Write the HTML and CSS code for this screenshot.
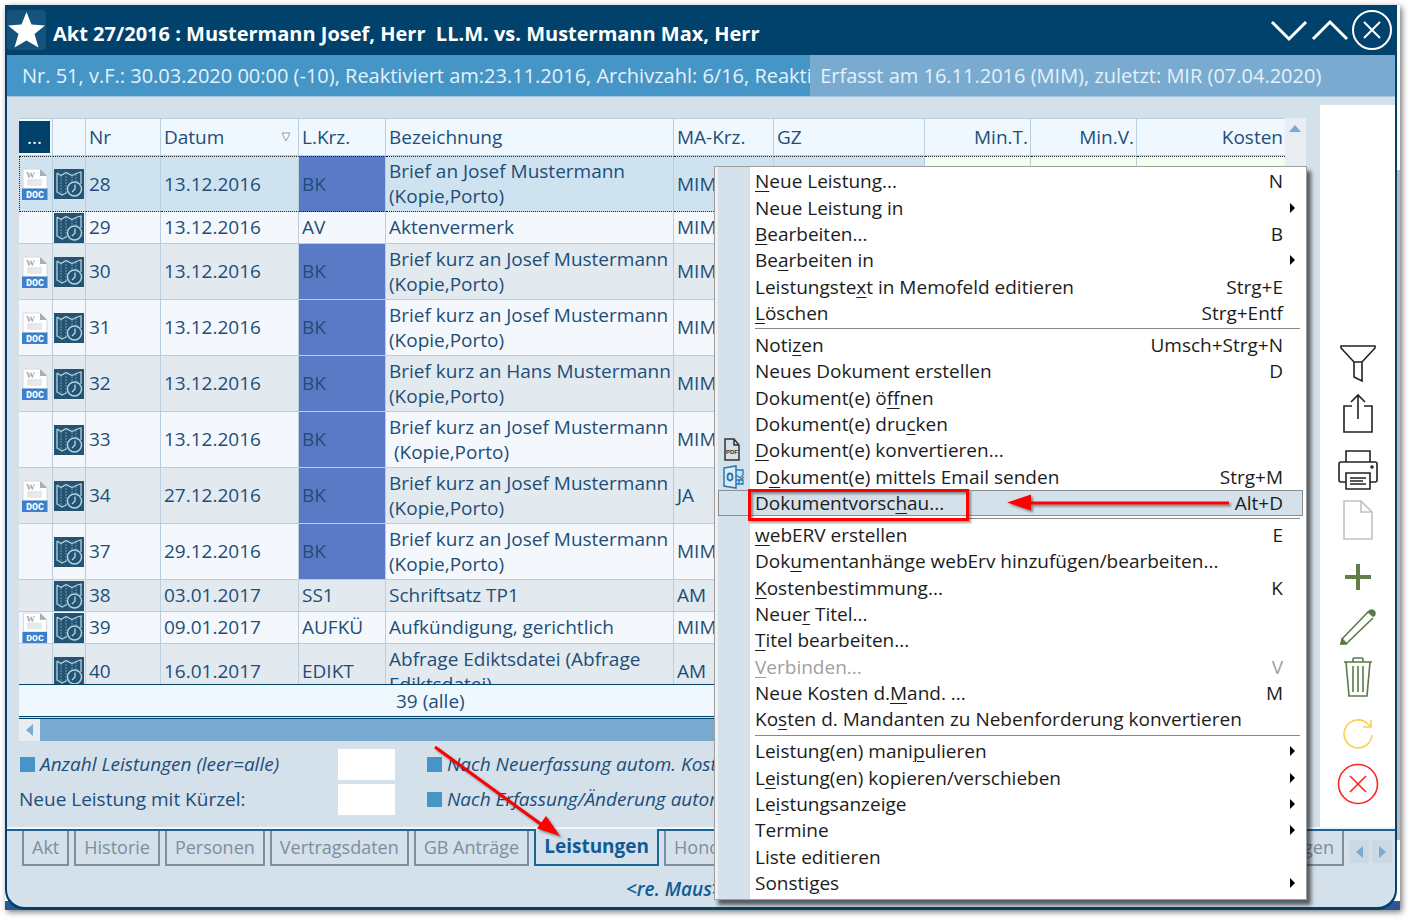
FILE: index.html
```html
<!DOCTYPE html>
<html lang="de">
<head>
<meta charset="utf-8">
<title>Akt 27/2016</title>
<link rel="stylesheet" href="styles.css">
</head>
<body>
<svg class="defs" aria-hidden="true">
  <symbol id="doc" viewBox="0 0 26 32">
    <path d="M1 1h17l7 7v13H1z" fill="#fff" stroke="#d5d8da" stroke-width="1"/>
    <path d="M18 1l7 7h-7z" fill="#a9adb0"/>
    <path d="M5 11h15v7H5z" fill="#e6e9ea"/>
    <text x="4" y="10" class="w-mark">W</text>
    <path d="M0 20.500h25.500V32H0z" fill="#3e80c8"/>
    <text x="13" y="30" class="doc-mark">DOC</text>
  </symbol>
  <symbol id="map" viewBox="0 0 30 30">
    <path d="M0 0h30v30H0z" fill="#235473"/>
    <path d="M3 4l4 2.500 5-3 6 3 4-2 5-1.500v12M3 4v19l5 3 5-2.500" fill="none" stroke="#b9d0de" stroke-width="1.300"/>
    <path d="M7 7v18M12 4v19M18 7v8M22 5v8" fill="none" stroke="#6f97b0" stroke-width="1" stroke-dasharray="2 1"/>
    <circle cx="20.500" cy="20" r="7" fill="#235473" stroke="#b9d0de" stroke-width="1.500"/>
    <path d="M21 15.500V20l-3 3" fill="none" stroke="#b9d0de" stroke-width="1.400"/>
  </symbol>
</svg>

<div class="frame">
<main class="window">
  <header class="titlebar">
    <button class="star" aria-label="Favorit"><svg viewBox="0 0 39 40"><path d="M19.500 2l5 12.500 13.500.9-10.500 8.600 4 13.500-12-7-12 7 4-13.500L1 15.400l13.500-.9z" fill="#fff"/></svg></button>
    <h1>Akt 27/2016 : Mustermann Josef, Herr&nbsp; LL.M. vs. Mustermann Max, Herr</h1>
    <div class="winbtns">
      <button aria-label="Nach unten"><svg width="41" height="42" viewBox="0 0 41 42"><path d="M3 13l17 17 17-17"/></svg></button>
      <button aria-label="Nach oben"><svg width="41" height="42" viewBox="0 0 41 42"><path d="M3 30l17-17 17 17"/></svg></button>
      <button aria-label="Schließen"><svg width="42" height="42" viewBox="0 0 42 42"><circle cx="21" cy="21" r="19"/><path d="M13 13l16 16M29 13L13 29"/></svg></button>
    </div>
  </header>
  <div class="info">
    <div class="info-a">Nr. 51, v.F.: 30.03.2020 00:00 (-10), Reaktiviert am:23.11.2016, Archivzahl: 6/16, Reaktiviert</div>
    <div class="info-b">Erfasst am 16.11.2016 (MIM), zuletzt: MIR (07.04.2020)</div>
  </div>

  <div class="work">
    <section class="content">
      <div class="gridbox">
        <div class="tablewrap">
          <table>
            <colgroup><col class="c-doc"><col class="c-map"><col class="c-nr"><col class="c-date"><col class="c-krz"><col class="c-bez"><col class="c-ma"><col><col class="c-min"><col class="c-min"><col class="c-cost"></colgroup>
            <thead><tr><th class="dots"><button>...</button></th><th></th><th>Nr</th><th><span class="sorted">Datum <svg width="10" height="10" viewBox="0 0 10 10"><path d="M1 1h8L5 9z" fill="#fff" stroke="#999"/></svg></span></th><th>L.Krz.</th><th>Bezeichnung</th><th>MA-Krz.</th><th>GZ</th><th class="r">Min.T.</th><th class="r">Min.V.</th><th class="r">Kosten</th></tr></thead>
            <tbody>
              <tr class="sel two"><td><svg class="doc"><use href="#doc"/></svg></td><td><svg class="map"><use href="#map"/></svg></td><td>28</td><td>13.12.2016</td><td class="bk">BK</td><td>Brief an Josef Mustermann<br>(Kopie,Porto)</td><td>MIM</td><td></td><td class="g"></td><td class="g"></td><td class="g"></td></tr>
              <tr><td></td><td><svg class="map"><use href="#map"/></svg></td><td>29</td><td>13.12.2016</td><td>AV</td><td>Aktenvermerk</td><td>MIM</td><td></td><td></td><td></td><td></td></tr>
              <tr class="two"><td><svg class="doc"><use href="#doc"/></svg></td><td><svg class="map"><use href="#map"/></svg></td><td>30</td><td>13.12.2016</td><td class="bk">BK</td><td>Brief kurz an Josef Mustermann<br>(Kopie,Porto)</td><td>MIM</td><td></td><td></td><td></td><td></td></tr>
              <tr class="two"><td><svg class="doc"><use href="#doc"/></svg></td><td><svg class="map"><use href="#map"/></svg></td><td>31</td><td>13.12.2016</td><td class="bk">BK</td><td>Brief kurz an Josef Mustermann<br>(Kopie,Porto)</td><td>MIM</td><td></td><td></td><td></td><td></td></tr>
              <tr class="two"><td><svg class="doc"><use href="#doc"/></svg></td><td><svg class="map"><use href="#map"/></svg></td><td>32</td><td>13.12.2016</td><td class="bk">BK</td><td>Brief kurz an Hans Mustermann<br>(Kopie,Porto)</td><td>MIM</td><td></td><td></td><td></td><td></td></tr>
              <tr class="two"><td></td><td><svg class="map"><use href="#map"/></svg></td><td>33</td><td>13.12.2016</td><td class="bk">BK</td><td>Brief kurz an Josef Mustermann<br>&nbsp;(Kopie,Porto)</td><td>MIM</td><td></td><td></td><td></td><td></td></tr>
              <tr class="two"><td><svg class="doc"><use href="#doc"/></svg></td><td><svg class="map"><use href="#map"/></svg></td><td>34</td><td>27.12.2016</td><td class="bk">BK</td><td>Brief kurz an Josef Mustermann<br>(Kopie,Porto)</td><td>JA</td><td></td><td></td><td></td><td></td></tr>
              <tr class="two"><td></td><td><svg class="map"><use href="#map"/></svg></td><td>37</td><td>29.12.2016</td><td class="bk">BK</td><td>Brief kurz an Josef Mustermann<br>(Kopie,Porto)</td><td>MIM</td><td></td><td></td><td></td><td></td></tr>
              <tr><td></td><td><svg class="map"><use href="#map"/></svg></td><td>38</td><td>03.01.2017</td><td>SS1</td><td>Schriftsatz TP1</td><td>AM</td><td></td><td></td><td></td><td></td></tr>
              <tr><td><svg class="doc"><use href="#doc"/></svg></td><td><svg class="map"><use href="#map"/></svg></td><td>39</td><td>09.01.2017</td><td>AUFKÜ</td><td>Aufkündigung, gerichtlich</td><td>MIM</td><td></td><td></td><td></td><td></td></tr>
              <tr class="two"><td></td><td><svg class="map"><use href="#map"/></svg></td><td>40</td><td>16.01.2017</td><td>EDIKT</td><td>Abfrage Ediktsdatei (Abfrage<br>Ediktsdatei)</td><td>AM</td><td></td><td></td><td></td><td></td></tr>
            </tbody>
          </table>
        </div>
        <div class="vscroll"><svg width="12" height="7" viewBox="0 0 12 7"><path d="M0 7l6-7 6 7z" fill="#79abd0"/></svg></div>
      </div>
      <div class="sum">39 (alle)</div>
      <div class="hscroll"><button aria-label="Nach links"><svg width="7" height="12" viewBox="0 0 7 12"><path d="M7 0v12L0 6z" fill="#79abd0"/></svg></button></div>
      <div class="options">
        <label class="chk"><input type="checkbox">Anzahl Leistungen (leer=alle)</label>
        <input class="txt" type="text" aria-label="Anzahl Leistungen">
        <label class="chk"><input type="checkbox">Nach Neuerfassung autom. Kosten</label>
        <label for="krz">Neue Leistung mit Kürzel:</label>
        <input class="txt" type="text" id="krz">
        <label class="chk"><input type="checkbox">Nach Erfassung/Änderung autom.</label>
      </div>
    </section>
    <aside class="tools">
      <button aria-label="Filter"><svg viewBox="0 0 42 42" stroke="#222"><path d="M4 4h34v2L25 20H17L4 6zM17 20v15l8 4V20M17 20h8"/></svg></button>
      <button aria-label="Exportieren"><svg viewBox="0 0 42 42" stroke="#222"><path d="M15 14H7v26h28V14h-8M21 27V3M14 10l7-7 7 7"/></svg></button>
      <button class="grp" aria-label="Drucken"><svg viewBox="0 0 42 42" stroke="#222"><path d="M9 13V2h24v11M9 33H4q-2 0-2-2V15q0-2 2-2h34q2 0 2 2v16q0 2-2 2h-5M9 24h24v16H9z"/><path d="M13 29h16M13 32h13M13 35h16"/><circle cx="35" cy="18" r="1"/></svg></button>
      <button aria-label="Neues Dokument"><svg viewBox="0 0 42 42" stroke="#c2c2c2" stroke-width="2"><path d="M7 2h17l11 11v27H7zM24 2v11h11"/></svg></button>
      <button class="grp" aria-label="Hinzufügen"><svg class="thick" viewBox="0 0 42 42" stroke="#5f7f48"><path d="M21 8v26M8 21h26"/></svg></button>
      <button aria-label="Bearbeiten"><svg viewBox="0 0 42 42" stroke="#5a7a45"><path d="M5 33L31 6M9 38L36 12M4 38l1-5 4 5z"/><path d="M3 39l2-7 5 5zM31 5q3-3 6-1t1 6l-2 1-6-5z" fill="#5a7a45" stroke="none"/></svg></button>
      <button aria-label="Löschen"><svg viewBox="0 0 42 42" stroke="#5a7a45"><path d="M7 6h28M16 6V3q0-1 1-1h8q1 0 1 1v3M9 6l3 34h18l3-34M16 10v26M21 10v26M26 10v26"/></svg></button>
      <button class="grp" aria-label="Aktualisieren"><svg viewBox="0 0 42 42" stroke="#fbd04f"><path d="M35 22a14 14 0 1 1-4-11l3 3M34 7v7h-8"/></svg></button>
      <button aria-label="Abbrechen"><svg viewBox="0 0 42 42" stroke="#f22"><circle cx="21" cy="21" r="19.500"/><path d="M13 13l16 16M29 13L13 29"/></svg></button>
    </aside>
  </div>

  <nav class="tabs">
    <button>Akt</button><button>Historie</button><button>Personen</button><button>Vertragsdaten</button><button>GB Anträge</button><button class="on">Leistungen</button><button>Honorar</button>
    <button class="last">Buchungen</button>
    <button class="nav" aria-label="Vorherige"><svg width="7" height="12" viewBox="0 0 7 12"><path d="M7 0v12L0 6z" fill="#79abd0"/></svg></button>
    <button class="nav" aria-label="Nächste"><svg width="7" height="12" viewBox="0 0 7 12"><path d="M0 0v12l7-6z" fill="#79abd0"/></svg></button>
  </nav>
  <footer class="hint">&lt;re. Maus&gt;</footer>
</main>
</div>

<div class="menu" role="menu">
  <button><i></i><span><u>N</u>eue Leistung...</span><kbd>N</kbd></button>
  <button class="sub"><i></i><span>Neue Leistung in</span></button>
  <button><i></i><span><u>B</u>earbeiten...</span><kbd>B</kbd></button>
  <button class="sub"><i></i><span>Be<u>a</u>rbeiten in</span></button>
  <button><i></i><span>Leistungste<u>x</u>t in Memofeld editieren</span><kbd>Strg+E</kbd></button>
  <button><i></i><span><u>L</u>öschen</span><kbd>Strg+Entf</kbd></button>
  <hr>
  <button><i></i><span>Noti<u>z</u>en</span><kbd>Umsch+Strg+N</kbd></button>
  <button><i></i><span>Neues Dokument erstellen</span><kbd>D</kbd></button>
  <button><i></i><span>Dokument(e) ö<u>f</u>fnen</span></button>
  <button><i></i><span>Dokument(e) dru<u>c</u>ken</span></button>
  <button><i><svg width="18" height="24" viewBox="0 0 18 24"><path d="M2 1h9l5 6v15H2zM11 1v6h5" fill="none" stroke="#333" stroke-width="1.500"/><text x="9" y="16" class="pdf-mark">PDF</text></svg></i><span><u>D</u>okument(e) konvertieren...</span></button>
  <button><i><svg width="22" height="24" viewBox="0 0 22 24"><path d="M1 3l12-2v22L1 21z" fill="#dcecf7" stroke="#2878b8" stroke-width="1.500"/><ellipse cx="7" cy="12" rx="2.500" ry="3.500" fill="none" stroke="#2878b8" stroke-width="1.800"/><path d="M13 5h7v5l-3 3-4-3M13 15h7v4h-7M16 19v-3l5-4" fill="none" stroke="#2878b8" stroke-width="1.300"/></svg></i><span>D<u>o</u>kument(e) mittels Email senden</span><kbd>Strg+M</kbd></button>
  <button class="hot"><i></i><span>Dokumentvorsc<u>h</u>au...</span><kbd>Alt+D</kbd></button>
  <hr>
  <button><i></i><span><u>w</u>ebERV erstellen</span><kbd>E</kbd></button>
  <button><i></i><span>Dok<u>u</u>mentanhänge webErv hinzufügen/bearbeiten...</span></button>
  <button><i></i><span><u>K</u>ostenbestimmung...</span><kbd>K</kbd></button>
  <button><i></i><span>Neue<u>r</u> Titel...</span></button>
  <button><i></i><span><u>T</u>itel bearbeiten...</span></button>
  <button disabled><i></i><span><u>V</u>erbinden...</span><kbd>V</kbd></button>
  <button><i></i><span>Neue Kosten d.<u>M</u>and. ...</span><kbd>M</kbd></button>
  <button><i></i><span>Ko<u>s</u>ten d. Mandanten zu Nebenforderung konvertieren</span></button>
  <hr>
  <button class="sub"><i></i><span>Leistung(en) mani<u>p</u>ulieren</span></button>
  <button class="sub"><i></i><span>L<u>e</u>istung(en) kopieren/verschieben</span></button>
  <button class="sub"><i></i><span>Le<u>i</u>stungsanzeige</span></button>
  <button class="sub"><i></i><span>Termine</span></button>
  <button><i></i><span>Liste editieren</span></button>
  <button class="sub"><i></i><span>Sonsti<u>g</u>es</span></button>
</div>

<svg class="marks" width="1409" height="919" viewBox="0 0 1409 919" aria-hidden="true">
  <path d="M749.500 490.500h218v29h-218z" fill="none" stroke="#f00" stroke-width="3"/>
  <path d="M1229 503H1028M435 747l107 78" fill="none" stroke="#f00" stroke-width="3"/>
  <path d="M1007 502.500l24-8v16zM560 836l-23-7.500 9-12.500z" fill="#f00"/>
</svg>
</body>
</html>
```
FILE: styles.css
```css
* { box-sizing: border-box; }
body {
  margin: 0;
  padding: 5px 9px 9px 5px;
  height: 100vh;
  display: flex;
  overflow: hidden;
  position: relative;
  background: #fff;
  color: #1d4e79;
  font: 19px/25px "Open Sans", "Noto Sans", sans-serif;
}
button, input { font: inherit; color: inherit; margin: 0; padding: 0; border: 0; background: none; }
svg { display: block; }
.defs { position: absolute; width: 0; height: 0; }
.w-mark { font: 700 9px "Liberation Serif", serif; fill: #a6aaad; }
.doc-mark { font: 700 10px "Liberation Mono", monospace; fill: #fff; text-anchor: middle; }
.pdf-mark { font: 700 6px "Liberation Sans", sans-serif; fill: #333; text-anchor: middle; }

.frame {
  flex: 1;
  min-width: 0;
  display: flex;
  padding-right: 3px;
  background: linear-gradient(to top, #2b579a 9px, #fff 9px, #fff 70px, #bbb 70px, #bbb 740px, #fff 740px);
  box-shadow: 2px 2px 6px #0008;
}
.window {
  flex: 1;
  min-width: 0;
  display: flex;
  flex-direction: column;
  overflow: hidden;
  background: #d4e0ea;
  border: solid #00426b;
  border-width: 0 2px 3px 2px;
  border-radius: 0 0 20px 20px;
}
.titlebar { display: flex; align-items: center; height: 50px; background: #00426b; color: #fff; }
.star { width: 39px; height: 40px; border-radius: 4px; background: #14537c; }
.titlebar h1 { flex: 1; margin: 6px 0 0 7px; font-size: 20px; font-weight: 700; white-space: pre; }
.winbtns { display: flex; margin-right: 2px; }
.winbtns svg { fill: none; stroke: #fff; stroke-width: 3; }
.winbtns button:last-child svg { stroke-width: 2; }

.info { display: flex; height: 42px; line-height: 42px; font-size: 20px; color: #e4f1fa; border-bottom: 1px solid #a9c9e0; white-space: nowrap; }
.info-a { flex: 802; min-width: 0; overflow: hidden; padding-left: 15px; background: #4596c6; }
.info-b { flex: 585; min-width: 0; overflow: hidden; padding-left: 10px; background: #79abd0; }

.work { flex: 1; min-height: 0; display: flex; padding-top: 8px; border-bottom: 2px solid #f2f6f9; }
.content { flex: 1; min-width: 0; display: flex; flex-direction: column; padding: 13px 14px 0 12px; }
.gridbox { flex: 1; min-height: 0; display: flex; overflow: hidden; }
.tablewrap { flex: 1; min-width: 0; overflow: hidden; }
table { width: 100%; table-layout: fixed; border-collapse: separate; border-spacing: 0; }
.c-doc { width: 34px; } .c-map { width: 33px; } .c-nr { width: 75px; } .c-date { width: 138px; }
.c-krz { width: 87px; } .c-bez { width: 288px; } .c-ma { width: 100px; } .c-min { width: 106px; } .c-cost { width: 148px; }
th, td { padding: 0 2px 0 3px; text-align: left; font-weight: 400; white-space: nowrap; border-right: 1px solid #b9cfdf; border-bottom: 1px solid #b9cfdf; }
th { height: 38px; background: #f0f8ff; border-top: 1px solid #b9cfdf; }
th:last-child, td:last-child { border-right: 0; }
th.r, td.r { text-align: right; }
.dots { padding: 0 2px 0 0; }
.dots button { display: block; width: 100%; height: 32px; background: #00426b; color: #fff; }
.sorted { display: flex; justify-content: space-between; align-items: center; padding-right: 5px; }
td { height: 32px; background: #f4f8fc; }
tr:nth-child(odd) td { background: #e2e9ef; }
.two td { height: 56px; }
tbody tr.sel td { background: #cfe2f0; border-bottom: 1px dotted #222; border-top: 1px dotted #222; }
tbody tr.sel td:first-child { border-left: 1px dotted #222; padding-left: 2px; }
tbody tr.sel td.g { background: #f0fff0; }
tbody tr td.bk { background: #5b7ac6; }
.doc { width: 26px; height: 32px; }
tr:not(.two) .doc { height: 31px; }
.map { width: 30px; height: 30px; }
td:nth-child(2) { padding: 0 0 0 1px; }
.vscroll { width: 21px; padding: 7px 4px; background: #e9edf2; }
.sum { height: 33px; line-height: 33px; padding-left: 377px; background: #f0f8ff; border: solid #00426b; border-width: 1px 0; }
.hscroll { height: 23px; margin-top: 1px; border-top: 1px solid #00426b; background: #79abd0; }
.hscroll button { width: 21px; height: 22px; padding: 0 7px; background: #e9edf2; }
.options { display: grid; grid-template-columns: 319px 57px 1fr; grid-auto-rows: 30px; row-gap: 5px; align-items: center; padding: 8px 0 13px; white-space: nowrap; }
.chk { display: flex; align-items: center; gap: 5px; font-style: italic; }
.chk input { appearance: none; width: 15px; height: 15px; margin-left: 1px; background: #4596c6; }
.txt + .chk { padding-left: 31px; }
.txt { width: 57px; height: 31px; background: #fff; }

.tools { width: 75px; display: flex; flex-direction: column; justify-content: flex-end; align-items: center; padding-bottom: 18px; background: #fff; }
.tools button { height: 50px; }
.tools .grp { margin-top: 7px; height: 50px; }
.tools svg { width: 42px; height: 42px; fill: none; stroke-width: 1.6; }
.tools svg.thick { stroke-width: 4; }

.tabs { display: flex; align-items: flex-start; gap: 5px; padding: 0 3px 0 15px; border-top: 2px solid #1a6496; white-space: nowrap; }
.tabs button { height: 35px; padding: 0 8px; font-size: 18px; color: #7b8f9e; border: 1px solid #7b8f9e; border-width: 0 2px 2px; }
.tabs .on { height: 37px; margin-top: -2px; font-size: 19px; color: #0f5c94; font-weight: 700; border-color: #1a6496; background: #d4e0ea; }
.tabs .last { margin-left: auto; }
.tabs .nav { width: 20px; height: 23px; margin-top: 9px; padding: 0 7px; border: 0; background: #cbd9e4; }
.tabs .nav:last-child { margin-left: -2px; }
.hint { height: 41px; padding: 11px 0 0 619px; color: #0f5c94; font-style: italic; font-weight: 600; }

.menu {
  position: absolute;
  left: 714px;
  top: 166px;
  bottom: 19px;
  width: 593px;
  display: flex;
  flex-direction: column;
  padding: 1px 3px 3px;
  border: 1px solid #a0a0a0;
  background: linear-gradient(to right, #f0f0f0 3px, #d4e0ea 3px, #d4e0ea 35px, #fff 35px);
  box-shadow: 4px 5px 4px #0009;
  color: #1c1c1c;
}
.menu button { flex: 26; min-height: 0; display: flex; align-items: center; padding-right: 19px; border: 1px solid transparent; text-align: left; white-space: nowrap; line-height: 24px; }
.menu i { width: 36px; padding-left: 4px; }
.menu span { flex: 1; }
.menu kbd { font: inherit; }
.menu u { text-decoration-thickness: 1px; text-underline-offset: 3px; }
.menu hr { flex: 6; width: 545px; margin: 0 3px 0 auto; border: 0; background: linear-gradient(#888, #888) center / 100% 1px no-repeat; }
.menu button:disabled { color: #a0a0a0; }
.menu .hot { background: #d4e0ea; border-color: #8a8f94; }
.menu .sub { padding-right: 7px; }
.menu .sub::after { content: ""; border: 5px solid transparent; border-left-color: #000; border-right: 0; }
.marks { position: absolute; left: 0; top: 0; pointer-events: none; filter: drop-shadow(2px 2px 1px #0006); }
```
